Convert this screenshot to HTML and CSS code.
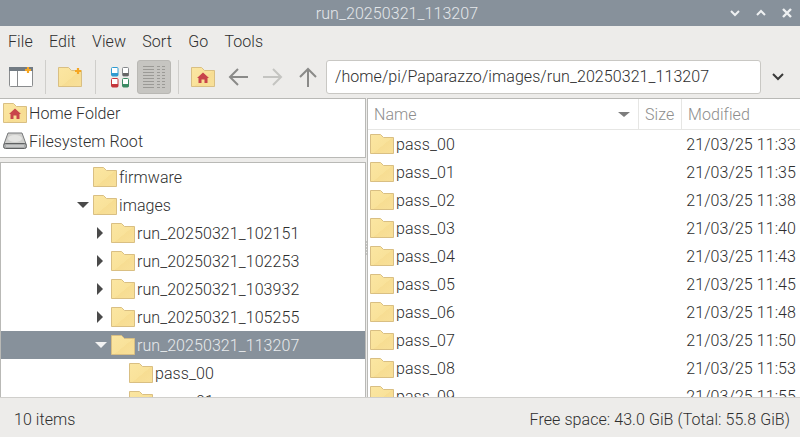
FILE: index.html
```html
<!DOCTYPE html>
<html lang="en">
<head>
    <meta charset="UTF-8" />
    <title>run_20250321_113207</title>
    <link rel="stylesheet" href="styles.css">
</head>
<body>
    <svg class="defs" width="0" height="0">
        <defs>
            <linearGradient id="folderFill" x1="0" y1="0" x2="1" y2="1">
                <stop offset="0" stop-color="#fbe6a2" />
                <stop offset="0.55" stop-color="#f9e29a" />
                <stop offset="0.56" stop-color="#f7dd92" />
                <stop offset="1" stop-color="#f8e09a" />
            </linearGradient>
            <symbol id="folder" viewBox="0 0 24 20">
                <path d="M.5 .5H10.500L13.500 3.500H23.500V19.500H.5Z" fill="url(#folderFill)" stroke="#d9bf83" />
            </symbol>
            <symbol id="home-folder" viewBox="0 0 24 20">
                <path d="M.5 .5H10.500L13.500 3.500H23.500V19.500H.5Z" fill="url(#folderFill)" stroke="#d9bf83" />
                <path d="M12 5.500L18 11H16.500V16H13.500V12.500H10.500V16H7.500V11H6Z" fill="#c8444b" />
            </symbol>
        </defs>
    </svg>

    <div class="window">
        <div class="titlebar">
            <span class="title">run_20250321_113207</span>
            <div class="win-buttons">
                <svg width="12" height="8" viewBox="0 0 12 8"><path d="M2 2L6 6L10 2" fill="none" stroke="#eef0f2" stroke-width="2" /></svg>
                <svg width="12" height="8" viewBox="0 0 12 8"><path d="M2 6L6 2L10 6" fill="none" stroke="#eef0f2" stroke-width="2" /></svg>
                <svg width="12" height="12" viewBox="0 0 12 12"><path d="M2 2L10 10M10 2L2 10" fill="none" stroke="#eef0f2" stroke-width="2.400" /></svg>
            </div>
        </div>

        <div class="menubar">
            <span>File</span>
            <span>Edit</span>
            <span>View</span>
            <span>Sort</span>
            <span>Go</span>
            <span>Tools</span>
        </div>

        <div class="toolbar">
            <svg class="tool-window" width="25" height="21" viewBox="0 0 25 21">
                <rect x=".5" y=".5" width="23" height="19" rx="1" fill="#fff" stroke="#8a8c8e" />
                <rect x="0" y="0" width="24" height="4" fill="#727b83" />
                <path d="M8.500 4V20" stroke="#8a8c8e" />
                <path d="M19 0V6M16 3H22" stroke="#f5a623" stroke-width="2.200" />
            </svg>
            <span class="sep sep-a"></span>
            <svg class="tool-newfolder" width="25" height="21" viewBox="0 0 25 21">
                <use href="#folder" width="24" height="20" />
                <path d="M20 1V7M17 4H23" stroke="#f5a623" stroke-width="2.200" />
            </svg>
            <span class="sep sep-b"></span>
            <svg class="tool-views" width="18" height="21" viewBox="0 0 18 21">
                <rect x=".5" y=".5" width="6.500" height="8.500" rx="1" fill="#fff" stroke="#2f9bd0" />
                <rect x="1" y="6" width="6" height="3" fill="#2f9bd0" />
                <rect x="11.500" y=".5" width="6" height="8.500" rx="1" fill="#fff" stroke="#85888b" />
                <rect x="12" y="6" width="5.500" height="3" fill="#666" />
                <rect x=".5" y="11.500" width="6.500" height="8.500" rx="1" fill="#fff" stroke="#c4363c" />
                <rect x="1" y="17" width="6" height="3" fill="#c4363c" />
                <rect x="11.500" y="11.500" width="6" height="8.500" rx="1" fill="#fff" stroke="#3a8a62" />
                <rect x="12" y="17" width="5.500" height="3" fill="#3a8a62" />
            </svg>
            <div class="tool-active">
                <svg width="24" height="24" viewBox="0 0 24 24" stroke="#9b9a96" stroke-width="1">
                    <path d="M1 1.500H12M15 1.500H18M20 1.500H23M1 4.500H12M15 4.500H18M20 4.500H23M1 7.500H12M15 7.500H18M20 7.500H23M1 10.500H12M15 10.500H18M20 10.500H23M1 13.500H12M15 13.500H18M20 13.500H23M1 16.500H12M15 16.500H18M20 16.500H23M1 19.500H12M15 19.500H18M20 19.500H23M1 22.500H12M15 22.500H18M20 22.500H23" />
                </svg>
            </div>
            <span class="sep sep-c"></span>
            <svg class="tool-home" width="24" height="20"><use href="#home-folder" width="24" height="20" /></svg>
            <svg class="tool-arrow first" width="20" height="20" viewBox="0 0 20 20"><path d="M20 10H2M10 2L2 10L10 18" fill="none" stroke="#8a8a88" stroke-width="2" /></svg>
            <svg class="tool-arrow" width="20" height="20" viewBox="0 0 20 20"><path d="M0 10H18M10 2L18 10L10 18" fill="none" stroke="#c4c4c1" stroke-width="2" /></svg>
            <svg class="tool-arrow" width="20" height="20" viewBox="0 0 20 20"><path d="M10 20V2M2 10L10 2L18 10" fill="none" stroke="#8a8a88" stroke-width="2" /></svg>
            <div class="path-entry">/home/pi/Paparazzo/images/run_20250321_113207</div>
            <svg class="path-chevron" width="14" height="10" viewBox="0 0 14 10"><path d="M2 2L7 7L12 2" fill="none" stroke="#3a3a3a" stroke-width="2" /></svg>
        </div>

        <div class="panes">
            <div class="side">
                <div class="places">
                    <div class="place"><svg width="24" height="20"><use href="#home-folder" width="24" height="20" /></svg>Home Folder</div>
                    <div class="place">
                        <svg width="24" height="20" viewBox="0 0 24 20">
                            <path d="M5 2H19L23 13H1Z" fill="#cfcfcd" stroke="#77797a" />
                            <ellipse cx="12" cy="7.500" rx="7" ry="3.500" fill="#e4e4e2" />
                            <rect x=".5" y="12.500" width="23" height="5" rx="2" fill="#a9abab" stroke="#5f6162" />
                            <path d="M3 15H21" stroke="#e6e6e6" />
                        </svg>Filesystem Root
                    </div>
                </div>
                <div class="tree">
                    <div class="node lvl1"><span class="expander"></span><svg width="24" height="20"><use href="#folder" width="24" height="20" /></svg>firmware</div>
                    <div class="node lvl1"><span class="expander open"></span><svg width="24" height="20"><use href="#folder" width="24" height="20" /></svg>images</div>
                    <div class="node lvl2"><span class="expander closed"></span><svg width="24" height="20"><use href="#folder" width="24" height="20" /></svg>run_20250321_102151</div>
                    <div class="node lvl2"><span class="expander closed"></span><svg width="24" height="20"><use href="#folder" width="24" height="20" /></svg>run_20250321_102253</div>
                    <div class="node lvl2"><span class="expander closed"></span><svg width="24" height="20"><use href="#folder" width="24" height="20" /></svg>run_20250321_103932</div>
                    <div class="node lvl2"><span class="expander closed"></span><svg width="24" height="20"><use href="#folder" width="24" height="20" /></svg>run_20250321_105255</div>
                    <div class="node lvl2 selected"><span class="expander open"></span><svg width="24" height="20"><use href="#folder" width="24" height="20" /></svg>run_20250321_113207</div>
                    <div class="node lvl3"><span class="expander"></span><svg width="24" height="20"><use href="#folder" width="24" height="20" /></svg>pass_00</div>
                    <div class="node lvl3"><span class="expander"></span><svg width="24" height="20"><use href="#folder" width="24" height="20" /></svg>pass_01</div>
                </div>
            </div>

            <div class="grip"><i></i><i></i><i></i><i></i><i></i></div>

            <div class="files">
                <div class="file-head">
                    <div class="col-name">Name<span class="sort-arrow"></span></div>
                    <div class="col-size">Size</div>
                    <div class="col-mod">Modified</div>
                </div>
                <div class="file-row"><svg width="24" height="20"><use href="#folder" width="24" height="20" /></svg><span class="fname">pass_00</span><span class="fdate">21/03/25 11:33</span></div>
                <div class="file-row"><svg width="24" height="20"><use href="#folder" width="24" height="20" /></svg><span class="fname">pass_01</span><span class="fdate">21/03/25 11:35</span></div>
                <div class="file-row"><svg width="24" height="20"><use href="#folder" width="24" height="20" /></svg><span class="fname">pass_02</span><span class="fdate">21/03/25 11:38</span></div>
                <div class="file-row"><svg width="24" height="20"><use href="#folder" width="24" height="20" /></svg><span class="fname">pass_03</span><span class="fdate">21/03/25 11:40</span></div>
                <div class="file-row"><svg width="24" height="20"><use href="#folder" width="24" height="20" /></svg><span class="fname">pass_04</span><span class="fdate">21/03/25 11:43</span></div>
                <div class="file-row"><svg width="24" height="20"><use href="#folder" width="24" height="20" /></svg><span class="fname">pass_05</span><span class="fdate">21/03/25 11:45</span></div>
                <div class="file-row"><svg width="24" height="20"><use href="#folder" width="24" height="20" /></svg><span class="fname">pass_06</span><span class="fdate">21/03/25 11:48</span></div>
                <div class="file-row"><svg width="24" height="20"><use href="#folder" width="24" height="20" /></svg><span class="fname">pass_07</span><span class="fdate">21/03/25 11:50</span></div>
                <div class="file-row"><svg width="24" height="20"><use href="#folder" width="24" height="20" /></svg><span class="fname">pass_08</span><span class="fdate">21/03/25 11:53</span></div>
                <div class="file-row"><svg width="24" height="20"><use href="#folder" width="24" height="20" /></svg><span class="fname">pass_09</span><span class="fdate">21/03/25 11:55</span></div>
            </div>
        </div>

        <div class="statusbar">
            <span>10 items</span>
            <span>Free space: 43.0 GiB (Total: 55.8 GiB)</span>
        </div>
    </div>
</body>
</html>
```

FILE: styles.css
```css
html, body {
    margin: 0;
    padding: 0;
}
body {
    font-family: Roboto, sans-serif;
    font-weight: 300;
    font-size: 16px;
    letter-spacing: 0.07px;
    color: #2e2e2e;
    background-color: #edecea;
    overflow: hidden;
}
svg {
    display: block;
    flex: none;
}
.defs {
    position: absolute;
}
.window {
    width: 800px;
    height: 437px;
    display: flex;
    flex-direction: column;
}

/* title bar */
.titlebar {
    height: 26px;
    flex: none;
    background-color: #87919b;
    color: #e4e7ea;
    display: flex;
    align-items: center;
    justify-content: center;
    padding-right: 6px;
    box-sizing: border-box;
    position: relative;
}
.win-buttons {
    position: absolute;
    right: 7px;
    top: 0;
    height: 26px;
    display: flex;
    align-items: center;
    gap: 14px;
}

/* menu */
.menubar {
    height: 29px;
    flex: none;
    display: flex;
    align-items: center;
    padding: 2px 0 0 8px;
    box-sizing: border-box;
    gap: 16.2px;
}

/* toolbar */
.toolbar {
    height: 43px;
    flex: none;
    display: flex;
    align-items: center;
    padding-left: 9px;
    padding-top: 1px;
    box-sizing: border-box;
}
.sep {
    width: 1px;
    height: 34px;
    background-color: #cfcecb;
}
.sep-a {
    margin: 0 12px 0 11px;
}
.sep-b {
    margin: 0 15px 0 12px;
}
.sep-c {
    margin: 0 12px 0 7px;
}
.tool-active {
    width: 34px;
    height: 34px;
    margin-left: 9px;
    box-sizing: border-box;
    background-color: #c6c5c1;
    border: 1px solid #b9b8b4;
    border-radius: 3px;
    display: flex;
    align-items: center;
    justify-content: center;
}
.tool-views {
    margin-right: -1px;
}
.tool-arrow {
    margin-left: 15px;
}
.tool-arrow.first {
    margin-left: 13px;
}
.path-entry {
    width: 435px;
    height: 34px;
    margin-left: 8px;
    box-sizing: border-box;
    background-color: #fff;
    border: 1px solid #c9c8c4;
    border-radius: 3px;
    padding-left: 8px;
    line-height: 32px;
}
.path-chevron {
    margin-left: 10px;
}

/* panes */
.panes {
    flex: 1;
    min-height: 0;
    display: flex;
}
.side {
    width: 366px;
    flex: none;
    display: flex;
    flex-direction: column;
    gap: 4px;
}
.places {
    height: 60px;
    flex: none;
    box-sizing: border-box;
    background-color: #fff;
    border: 1px solid #b9b9b6;
    border-left-width: 0;
}
.place {
    height: 28px;
    display: flex;
    align-items: center;
    gap: 2px;
    padding-left: 3px;
}
.tree {
    flex: 1;
    min-height: 0;
    overflow: hidden;
    box-sizing: border-box;
    background-color: #fff;
    border: 1px solid #b9b9b6;
    border-bottom: 0;
}
.node {
    height: 28px;
    display: flex;
    align-items: center;
    box-sizing: border-box;
}
.node svg {
    margin-right: 2px;
}
.lvl1 {
    padding-left: 75px;
}
.lvl2 {
    padding-left: 93px;
}
.lvl3 {
    padding-left: 111px;
}
.expander {
    width: 17px;
    height: 12px;
    flex: none;
    position: relative;
}
.expander.open::before {
    content: "";
    position: absolute;
    left: 1px;
    top: 3px;
    border-left: 6px solid transparent;
    border-right: 6px solid transparent;
    border-top: 6px solid #4a4a4a;
}
.expander.closed::before {
    content: "";
    position: absolute;
    left: 3px;
    top: 0;
    border-top: 6px solid transparent;
    border-bottom: 6px solid transparent;
    border-left: 6px solid #4a4a4a;
}
.selected {
    background-color: #87919b;
    color: #e8eaec;
}
.selected .expander.open::before {
    border-top-color: #f2f2f2;
}

/* splitter */
.grip {
    width: 1px;
    flex: none;
    display: flex;
    flex-direction: column;
    justify-content: center;
    gap: 1px;
}
.grip i {
    display: block;
    height: 2px;
    background-color: #c4c4c1;
}

/* file list */
.files {
    flex: 1;
    min-width: 0;
    overflow: hidden;
    background-color: #fff;
    border: 1px solid #b9b9b6;
    border-right: 0;
    border-bottom: 0;
    box-sizing: border-box;
}
.file-head {
    height: 31px;
    box-sizing: border-box;
    display: flex;
    color: #8d8d8d;
    border-bottom: 1px solid #e6e6e4;
}
.file-head > div {
    display: flex;
    align-items: center;
    padding-left: 6px;
    box-sizing: border-box;
}
.col-name {
    width: 270px;
    position: relative;
}
.col-size {
    width: 43px;
    border-left: 1px solid #e6e6e4;
}
.col-mod {
    flex: 1;
    border-left: 1px solid #e6e6e4;
}
.sort-arrow {
    position: absolute;
    right: 8px;
    top: 13px;
    border-left: 6px solid transparent;
    border-right: 6px solid transparent;
    border-top: 5px solid #7d7d7d;
}
.file-row {
    height: 28px;
    display: flex;
    align-items: center;
    padding-left: 2px;
}
.fname {
    margin-left: 2px;
    flex: 1;
}
.fdate {
    padding-right: 4px;
}

/* status */
.statusbar {
    height: 40px;
    flex: none;
    display: flex;
    align-items: center;
    justify-content: space-between;
    padding: 3px 10px 0 14px;
    border-top: 1px solid #d0cfcc;
    box-sizing: border-box;
}
```
